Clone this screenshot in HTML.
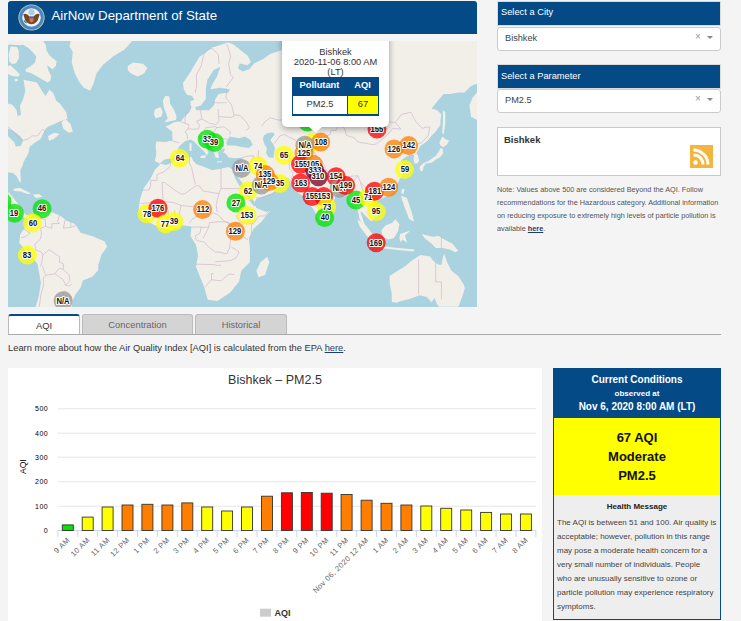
<!DOCTYPE html>
<html><head><meta charset="utf-8">
<style>
*{box-sizing:border-box;margin:0;padding:0}
html,body{width:741px;height:621px;overflow:hidden;background:#f4f4f4;font-family:"Liberation Sans",sans-serif;position:relative}
.a{position:absolute;white-space:nowrap;line-height:normal}
#hdr{position:absolute;left:8px;top:1px;width:469px;height:33px;background:#034a87;border-radius:3px 3px 0 0}
#map{position:absolute;left:8px;top:41px;width:469px;height:266px;overflow:hidden;background:#aad3df}
#map svg{position:absolute;left:0;top:0}
.land path{fill:#f2efe9}
.water path{fill:#aad3df}
.mt{position:absolute;width:40px;text-align:center;font:bold 8.8px/normal "Liberation Sans",sans-serif;color:#111;transform:scaleX(0.87);text-shadow:1px 0 0 #fff,-1px 0 0 #fff,0 1px 0 #fff,0 -1px 0 #fff,0.7px 0.7px 0 #fff,-0.7px -0.7px 0 #fff,0.7px -0.7px 0 #fff,-0.7px 0.7px 0 #fff;white-space:nowrap}
.xx{font:bold 8.5px "Liberation Sans",sans-serif;text-anchor:middle;fill:#111;stroke:#fff;stroke-width:2px;paint-order:stroke;stroke-linejoin:round;letter-spacing:-0.3px}
.phead{position:absolute;left:497px;width:224px;height:25px;background:#034a87;border:1px solid #ddd9d4}
.sel{position:absolute;left:497px;width:224px;height:24px;background:#fff;border:1px solid #cbcbcb;border-radius:3px}
.box{position:absolute;background:#fff;border:1px solid #c8c8c8}
#popup{position:absolute;left:274px;top:-10px;width:107px;height:95.5px;background:#fff;border-radius:5px;box-shadow:0 2px 6px rgba(0,0,0,0.35)}
.tab{position:absolute;top:314px;height:21px;border:1px solid #bbb;border-bottom:none;border-radius:3px 3px 0 0;background:#d4d4d4;font-size:9.4px;color:#666;text-align:center;line-height:20px}
</style></head><body>
<div id="hdr">
 <svg style="position:absolute;left:10px;top:3.3px" width="27" height="27" viewBox="0 0 28 28">
  <circle cx="14" cy="14" r="13.6" fill="#c9c98a"/>
  <circle cx="14" cy="14" r="12.8" fill="#4a86c8"/>
  <circle cx="14" cy="14" r="12.8" fill="none" stroke="#8fb6e0" stroke-width="0.8" stroke-dasharray="1 1"/>
  <circle cx="14" cy="14" r="9.6" fill="#f2f2ee"/>
  <circle cx="14" cy="8.5" r="3.2" fill="#a9cde3"/>
  <path d="M5.5,10.5 Q9,9 12,13 L14,18 L16,13 Q19,9 22.5,10.5 L20.5,17 Q17,21 14,21 Q11,21 7.5,17Z" fill="#6e4b26"/>
  <path d="M12,13 h4 v5 q-2,2.2 -4,0z" fill="#e07070"/>
  <path d="M12,13 h4 v1.8 h-4z" fill="#3c5fb0"/>
  <path d="M6,17 q1.5,2 3,2.5" stroke="#4c8a3c" stroke-width="1.3" fill="none"/>
 </svg>
 <div class="a" style="left:43.5px;top:7px;font-size:13.3px;color:#fff">AirNow Department of State</div>
</div>

<div id="map">
 <svg width="469" height="266" viewBox="8 41 469 266">
  <g class="land"><path d="M70.6,41.0 L69.5,46.4 L72.8,51.8 L71.7,62.6 L74.9,73.4 L79.3,82.0 L83.6,87.4 L90.1,90.7 L93.3,84.2 L96.5,73.4 L103.0,64.8 L113.8,56.1 L124.6,49.6 L132.2,41.0Z"/><path d="M127.8,65.8 L133.2,62.6 L143.0,63.7 L147.3,68.0 L144.0,73.4 L137.6,76.6 L131.1,73.4 L127.8,70.2Z"/><path d="M8.0,41.0 L43.1,41.0 L45.8,45.0 L46.5,50.4 L49.8,55.8 L56.6,61.2 L55.9,66.0 L52.5,69.3 L49.8,67.3 L47.1,65.3 L48.5,70.7 L51.2,76.1 L50.5,80.6 L47.6,82.5 L41.8,79.2 L36.3,76.1 L30.3,72.7 L26.2,72.0 L25.5,69.3 L30.3,66.6 L35.0,62.6 L36.3,56.5 L33.0,52.5 L28.2,47.7 L23.5,45.0 L16.1,45.0 L10.7,44.4 L8.0,45.0Z"/><path d="M10.7,46.4 L16.8,47.1 L18.8,51.1 L18.8,58.5 L16.1,63.3 L12.0,63.9 L9.3,61.2 L8.7,54.5Z"/><path d="M8.0,66.0 L10.7,65.3 L15.4,70.0 L20.1,74.7 L18.1,76.8 L12.0,76.1 L8.0,74.1Z"/><path d="M14.3,79.2 L17.7,78.7 L17.7,81.1 L14.8,81.6Z"/><path d="M23.5,79.7 L36.9,82.5 L42.8,92.2 L45.6,96.1 L49.5,89.4 L53.3,93.3 L56.4,101.0 L59.8,103.6 L66.3,112.3 L67.4,118.7 L60.9,120.9 L54.4,124.1 L49.0,126.3 L45.8,128.5 L43.6,132.8 L40.4,139.3 L35.0,142.5 L29.6,146.8 L28.5,153.3 L24.2,160.8 L22.2,166.4 L20.2,170.3 L20.9,179.3 L20.2,183.2 L17.0,176.7 L13.2,172.9 L8.0,172.2 L8.0,103.6 L12.3,104.7 L16.6,110.1 L17.7,116.6 L21.0,114.4 L19.9,105.8 L23.1,99.3 L25.3,90.7Z"/><path d="M61.6,122.0 L65.2,118.7 L70.6,124.1 L72.8,131.7 L68.5,132.8 L63.1,128.5Z"/><path d="M48.0,136.0 L54.4,132.8 L59.8,133.9 L53.3,139.3 L49.0,140.8Z"/><path d="M13.2,189.0 L19.6,187.7 L26.0,190.9 L31.2,193.5 L27.3,194.1 L20.9,191.5 L14.4,190.9Z"/><path d="M32.5,194.8 L38.9,194.1 L42.8,196.7 L36.3,198.0Z"/><path d="M8.0,192.0 L12.0,196.0 L18.0,204.0 L22.0,210.0 L26.0,215.0 L32.0,216.0 L30.0,220.0 L22.0,217.0 L16.0,210.0 L10.0,204.0 L8.0,200.0Z"/><path d="M23.6,229.3 L32.0,219.0 L40.9,213.8 L51.2,212.1 L59.8,215.5 L66.7,220.7 L75.3,224.1 L80.5,232.8 L92.6,236.2 L104.7,241.4 L107.2,246.6 L101.2,255.2 L98.3,265.0 L98.3,270.0 L92.6,276.5 L82.9,280.5 L80.5,287.8 L75.6,294.3 L72.4,300.8 L71.6,307.0 L35.7,307.0 L39.1,294.8 L40.9,282.8 L39.1,272.4 L37.4,263.8 L32.2,256.9 L25.3,250.0 L19.3,243.1 L20.2,234.5Z"/><path d="M290.0,41.0 L477.0,41.0 L477.0,83.7 L471.0,86.1 L464.6,92.5 L458.2,92.5 L450.1,94.1 L443.7,94.1 L437.2,101.4 L431.6,108.6 L437.2,110.2 L441.3,114.3 L440.5,119.9 L440.4,125.0 L435.6,131.8 L431.7,135.6 L427.9,140.5 L424.0,143.4 L420.1,146.3 L418.2,150.1 L416.3,153.0 L418.2,155.9 L419.2,160.7 L417.2,163.6 L414.3,163.6 L413.4,158.8 L414.3,155.0 L411.4,154.0 L405.6,156.9 L400.8,160.7 L404.0,166.0 L402.5,175.0 L399.8,178.9 L392.7,193.1 L383.3,197.9 L376.2,201.4 L372.6,205.0 L378.5,214.4 L371.4,221.5 L364.3,214.4 L360.8,210.9 L364.3,223.9 L370.3,231.0 L366.7,231.0 L359.6,219.2 L357.2,207.3 L350.1,202.6 L345.4,190.8 L335.9,195.5 L331.2,207.3 L326.5,221.5 L318.9,220.0 L314.1,210.2 L304.4,197.3 L293.1,189.2 L288.3,178.0 L281.9,179.6 L278.6,189.2 L272.2,193.0 L256.1,199.0 L254.2,203.8 L256.4,208.1 L266.3,212.0 L270.4,210.2 L261.5,221.7 L253.8,228.4 L249.0,238.1 L249.9,249.1 L249.9,262.0 L241.3,270.7 L239.1,281.5 L230.5,292.3 L217.5,300.9 L207.8,299.8 L204.5,288.0 L200.2,277.2 L195.9,266.4 L198.1,255.6 L195.9,244.8 L190.5,236.1 L191.6,226.4 L183.0,225.3 L170.0,229.7 L159.4,227.4 L150.2,222.8 L143.4,215.9 L138.8,209.0 L139.9,199.8 L143.4,188.4 L150.2,179.2 L154.8,170.0 L156.4,168.3 L159.7,165.1 L159.7,163.5 L154.8,161.1 L156.4,153.8 L155.6,145.8 L156.4,141.5 L166.0,142.0 L172.5,140.0 L172.1,131.4 L165.4,126.5 L168.1,125.5 L174.8,122.0 L180.6,121.5 L184.6,116.7 L189.5,111.9 L191.1,108.6 L190.3,101.4 L194.3,99.8 L191.9,95.8 L187.0,94.9 L183.8,89.3 L183.0,82.9 L189.7,73.2 L199.3,57.1 L212.2,47.4 L228.3,42.6 L233.1,44.2 L241.2,50.7 L247.6,55.5 L250.9,61.9 L247.6,65.2 L239.6,63.5 L238.0,68.4 L242.8,71.6 L249.3,69.2 L254.1,63.5 L263.7,58.7 L270.2,53.9 L279.9,50.7 L282.0,50.0Z"/><path d="M165.3,95.8 L169.3,96.6 L170.1,103.8 L174.2,110.2 L176.6,116.7 L175.8,119.9 L169.3,121.5 L164.5,122.3 L167.7,118.3 L166.1,113.5 L163.7,107.0 L162.9,100.6Z"/><path d="M154.8,109.4 L160.5,107.0 L162.9,111.9 L161.3,116.7 L155.6,118.3 L154.0,114.3Z"/><path d="M267.2,256.7 L269.3,262.1 L265.0,275.0 L258.5,277.2 L256.4,270.7 L260.7,262.1Z"/><path d="M381.5,230.0 L385.4,225.6 L392.4,222.8 L395.2,219.0 L399.4,224.2 L398.0,231.2 L393.8,238.2 L388.2,239.6 L382.6,236.8Z"/><path d="M357.2,219.2 L364.3,223.9 L373.8,235.7 L377.4,242.8 L373.8,242.8 L366.7,235.7 L359.6,226.3Z"/><path d="M378.0,246.0 L385.4,246.6 L398.0,248.0 L414.8,249.4 L413.4,251.5 L398.0,250.1 L386.8,248.7 L379.0,248.5Z"/><path d="M400.1,234.0 L410.6,230.5 L405.0,235.4 L407.1,242.4 L402.2,239.6 L400.8,242.4 L399.4,238.2Z"/><path d="M401.0,195.5 L406.9,197.9 L411.7,212.1 L414.0,221.5 L409.3,219.2 L404.6,207.3 L402.2,200.2Z"/><path d="M402.2,188.4 L404.6,189.6 L403.4,194.3 L401.0,193.1Z"/><path d="M421.8,234.0 L427.4,235.4 L433.0,236.8 L438.6,236.1 L444.2,239.6 L452.6,243.8 L458.2,250.8 L455.4,252.2 L449.8,249.4 L442.8,248.0 L435.8,248.0 L431.6,243.8 L424.6,238.2Z"/><path d="M389.6,276.0 L393.8,273.2 L405.0,266.2 L412.0,260.6 L420.4,255.0 L430.2,256.4 L433.0,260.6 L438.6,264.8 L441.4,264.8 L442.8,257.8 L444.2,253.6 L447.0,262.0 L451.2,270.4 L458.2,276.0 L463.8,284.4 L464.8,288.2 L462.6,295.8 L458.3,306.8 L438.9,306.8 L436.7,303.4 L434.6,298.0 L431.3,302.3 L427.0,296.9 L419.4,295.3 L409.7,299.0 L400.0,301.2 L397.2,302.8 L391.8,302.1 L391.8,294.0 L389.8,284.5Z"/><path d="M442.3,136.6 L446.2,139.5 L449.1,140.5 L447.2,144.3 L443.3,147.2 L440.4,145.3 L439.4,142.4Z"/><path d="M442.3,148.2 L443.3,153.0 L440.4,156.9 L435.6,159.8 L431.7,162.7 L425.9,163.6 L423.0,167.5 L420.1,166.5 L423.0,163.6 L428.8,160.7 L435.6,155.9 L438.5,152.1 L440.4,148.2Z"/><path d="M420.1,165.6 L423.5,166.5 L423.0,170.4 L421.1,171.4 L419.6,169.0Z"/><path d="M442.9,110.2 L445.3,111.9 L445.3,123.1 L443.7,134.4 L442.1,132.8 L442.9,121.5Z"/><path d="M477.0,92.5 L472.7,97.4 L469.4,105.4 L471.0,116.7 L477.0,119.9Z"/></g>
  <g class="water"><path d="M8.0,128.5 L14.5,131.7 L19.9,136.0 L23.1,140.3 L21.0,145.7 L15.6,146.8 L14.5,142.5 L10.2,138.2 L8.0,136.0Z"/><path d="M220.3,66.8 L217.0,76.4 L212.2,84.5 L210.6,89.3 L220.3,87.7 L229.9,89.3 L228.3,92.5 L218.7,94.1 L215.4,99.0 L213.8,105.4 L209.0,110.3 L196.1,110.3 L195.3,107.0 L200.9,105.4 L205.8,99.0 L205.8,89.3 L207.4,79.7 L213.8,70.0Z"/><path d="M159.7,163.5 L164.5,159.5 L170.9,158.6 L176.6,152.2 L179.0,146.6 L184.9,141.2 L190.5,139.6 L193.8,141.2 L197.0,144.4 L201.0,148.5 L204.3,151.7 L205.9,154.1 L206.7,155.5 L208.5,153.0 L206.7,148.5 L204.3,145.2 L200.2,139.6 L197.8,136.3 L201.0,135.5 L206.7,141.2 L212.4,147.7 L214.0,152.5 L215.6,157.4 L218.9,158.2 L218.1,151.7 L223.7,148.5 L225.3,148.5 L223.1,152.7 L225.3,153.3 L228.6,157.4 L235.1,158.3 L243.2,157.5 L240.0,161.6 L234.3,167.2 L233.5,170.4 L228.6,167.1 L220.5,168.7 L212.4,170.3 L204.3,167.1 L196.2,163.9 L193.0,160.6 L191.3,156.6 L188.1,157.4 L180.0,159.0 L166.1,165.1Z"/><path d="M226.3,142.2 L229.5,136.6 L239.2,138.2 L244.8,136.6 L250.4,139.8 L252.8,144.7 L248.8,147.9 L241.6,147.1 L235.1,145.5 L227.1,145.5Z"/><path d="M263.7,135.5 L267.7,133.0 L273.3,132.6 L274.5,134.7 L271.7,137.9 L270.5,140.3 L273.3,144.3 L274.9,148.3 L274.1,154.0 L273.3,158.0 L268.5,157.2 L266.1,153.2 L266.9,148.3 L264.5,144.3 L262.9,139.5Z"/><path d="M233.5,170.4 L236.0,175.0 L241.0,181.0 L246.0,189.0 L251.0,197.0 L256.0,204.0 L254.0,206.5 L249.0,200.0 L244.0,192.0 L239.0,185.0 L235.0,178.0 L233.0,172.0Z"/><path d="M262.0,178.0 L270.0,180.0 L278.0,186.0 L282.0,190.0 L276.0,190.0 L268.0,186.0 L262.0,182.0Z"/></g>
  <g class="land"><path d="M201.0,155.8 L206.0,155.2 L205.0,158.2 L200.0,157.8Z"/><path d="M189.5,143.2 L191.5,143.2 L191.5,151.0 L189.5,151.0Z"/><path d="M217.0,161.5 L222.0,161.2 L222.0,162.3 L217.0,162.5Z"/><path d="M328.0,218.0 L330.0,219.0 L330.0,223.0 L328.0,222.0Z"/></g>
  <path fill="none" stroke="#c9aec9" stroke-width="0.6" d="M8.2,127.1 L13.9,131.9 L16.8,135.9 L23.4,140.4 L29.1,138.6 L31.6,135.9 L37.7,135.9 L40.5,131.9 L42.4,129.4 L44.7,130.5 L46.2,135.9M170.1,140.1 L174.8,141.7 L179.6,142.7M178.2,118.7 L181.5,122.2 L185.1,123.4 L189.1,124.8 L187.9,128.8 L184.9,132.1 L186.8,133.5 L187.8,139.1M185.1,123.4 L184.9,119.0 L186.8,111.3M190.0,106.8 L192.3,107.1M200.5,110.0 L201.2,116.0 L202.0,119.0 L196.7,121.1 L199.7,125.4 L198.2,129.1 L191.7,129.1 L187.9,128.8M218.2,109.0 L218.3,115.6 L219.1,120.5 L216.2,124.6 L209.6,123.4 L202.0,119.0M213.4,102.8 L226.7,102.8M226.7,91.1 L225.8,98.0 L231.4,104.5 L234.3,116.0 L230.5,117.5 L219.1,116.6M234.3,115.0 L240.0,115.3 L246.1,121.9 L249.5,127.7 L245.7,130.5M216.2,127.7 L224.0,126.8 L230.5,131.9 L229.7,134.8M216.4,138.0 L227.8,139.3M209.6,133.0 L216.4,137.2 L217.0,142.9 L212.4,145.0 L210.4,143.7 L204.8,139.9 L199.3,134.6M204.3,130.8 L205.8,127.7 L215.3,126.6 L216.8,127.4 L213.4,132.7 L209.2,133.5 L204.3,130.8M211.5,149.4 L213.4,146.7 L217.0,145.5 L223.5,144.5 L223.3,146.5M195.2,92.6 L196.7,85.0 L196.3,74.9 L201.1,66.2 L203.9,54.2 L208.7,49.1 L212.4,48.5M219.1,63.9 L218.3,54.7 L212.4,48.5M226.7,44.2 L228.6,49.1 L230.5,56.2 L228.6,63.9 L230.5,74.9 L233.3,77.4 L226.3,87.0M261.9,126.3 L264.7,121.9 L270.4,117.8 L279.3,120.2 L289.4,119.0 L289.4,109.7 L304.6,105.5 L314.1,111.3 L318.9,109.7 L321.7,114.4 L332.1,119.0 L338.8,124.6M274.2,143.7 L279.9,135.9 L284.6,134.6 L289.4,137.2 L295.1,139.9 L298.9,143.7 L302.7,146.2 L307.4,142.9 L314.1,140.6 L325.5,141.7 L326.4,135.9 L330.2,134.6 L331.2,129.9 L335.9,130.5 L338.8,124.6M338.8,124.6 L346.4,120.5 L359.7,116.0 L371.1,121.4 L378.7,124.0 L390.1,121.9 L395.2,122.5 L400.9,129.1 L392.9,128.5 L386.3,135.9 L376.8,143.7 L373.0,144.7 L357.8,141.9 L354.6,138.0 L346.4,135.4 L344.5,128.3 L338.8,124.6M395.2,122.5 L401.5,114.4 L411.0,112.2 L415.8,121.9 L422.4,128.3 L426.2,127.1 L430.0,127.1 L428.1,135.9 L422.8,141.2 L421.6,142.7M409.7,148.7 L416.7,144.0 L421.6,142.7M314.1,140.6 L313.1,149.9 L316.0,155.9 L321.3,159.4 L324.5,166.3 L327.4,171.3 L333.1,175.0 L340.7,177.2 L348.3,176.5 L357.8,175.7 L360.6,182.4 L366.4,188.2 L375.9,187.6 L378.7,189.6M314.1,165.1 L315.0,169.6 L308.4,176.1 L305.5,179.3 L303.6,185.1M258.6,150.4 L258.1,155.5 L259.9,160.6 L260.9,165.1 L264.7,170.7M289.4,156.9 L289.4,168.9 L293.2,172.9 L290.4,182.0M276.1,155.2 L281.8,153.6 L289.4,156.9M242.8,172.9 L247.6,166.9 L253.3,169.4 L261.9,173.7 L264.7,173.9 L268.5,182.4 L271.4,184.1 L278.9,187.1 L272.3,194.6 L265.6,196.6 L261.9,198.0 L255.6,197.6M253.9,155.7 L251.4,162.0 L247.6,166.9M241.9,157.8 L245.7,156.4 L253.9,155.7M349.2,190.6 L352.1,183.4 L357.8,175.7M360.6,182.4 L363.5,192.6 L369.2,187.6M363.5,192.6 L367.3,196.6 L373.0,202.5 L374.9,210.2M360.6,212.2 L363.5,218.8 L365.4,219.8M170.1,160.6 L170.3,166.3 L164.0,171.8 L157.0,174.6 L157.0,177.6 L157.0,180.3 L150.7,180.3 L150.7,185.5 L148.8,190.0 L141.2,190.0M164.4,182.4 L175.4,190.6 L181.5,194.2 L184.9,193.6 L196.3,185.5 L200.1,186.5 L202.9,191.0 L219.1,193.6 L219.1,192.6 L221.0,188.6M189.7,156.2 L189.1,162.9 L191.6,167.4 L192.5,171.8 L195.3,184.5M221.0,168.3 L221.0,188.6 L243.8,188.6M150.7,202.5 L163.1,201.5 L173.5,202.5 L181.1,205.4 L188.7,206.4 L200.1,206.4 L202.9,212.2 L213.4,213.1 L218.2,215.0 L224.8,221.7 L232.4,224.5 L240.0,222.6 L253.3,223.6M151.7,203.5 L163.1,201.5 L162.1,182.6 L164.4,182.4M219.1,192.6 L216.2,204.4 L217.2,212.2M242.8,203.9 L239.1,213.1 L236.2,216.0 L240.0,221.7M197.2,240.5 L204.8,242.4 L207.7,246.2 L215.3,252.0 L219.1,252.0 L226.7,253.9 L229.6,248.1 L230.5,238.6 L229.6,233.9 L230.5,229.2 L232.4,226.8 L228.6,222.6 L225.8,221.7 L219.1,221.7 L209.6,222.6 L208.7,227.3 L205.8,233.0 L202.9,238.6M195.7,264.2 L213.4,264.6 L218.2,265.6 L221.0,265.2M204.8,287.2 L211.5,279.8 L211.5,273.6 L213.4,273.6M211.5,279.8 L221.0,280.8 L228.6,274.2 L234.3,274.6M215.3,261.7 L230.5,260.7 L236.2,257.8 L239.1,252.0 L235.2,249.1 L231.4,247.2M248.0,240.0 L238.1,233.0 L230.5,233.0M251.4,234.3 L251.4,223.6M253.3,223.6 L259.0,216.0 L264.7,216.0 L270.4,209.3M178.6,219.0 L180.3,208.9 L181.1,205.4M201.1,208.3 L199.2,212.2 L196.3,216.9 L192.5,218.8 L189.7,222.6M151.7,217.9 L159.2,215.0 L158.3,211.2 L150.7,207.3M167.8,221.7 L168.4,210.2M175.8,219.8 L174.4,210.2M141.2,203.5 L150.7,202.5M191.6,227.3 L195.0,227.0 L200.1,227.0 L203.9,227.3 L208.7,227.3M196.3,240.5 L195.3,235.8 L200.1,233.0 L201.1,227.0M36.7,208.7 L35.8,214.1 L36.7,217.9 L45.2,219.4 L45.6,226.4 L40.5,228.3 L41.5,233.0 L40.5,239.0M59.5,215.0 L57.6,221.7 L59.5,223.6 L51.9,223.6 L51.9,228.3 L45.6,226.4M65.2,219.8 L63.3,228.3 L70.9,227.3 L70.9,220.3M75.7,223.0 L74.7,226.4 L70.9,227.3M21.1,237.5 L25.3,236.8 L30.1,233.0 L23.4,228.8M40.5,239.0 L34.8,244.3 L35.8,250.0 L41.5,252.0 L42.8,254.9 L42.4,258.7 L41.5,264.6 L39.9,266.2M42.8,254.9 L49.1,249.7 L59.5,256.8 L59.5,262.2 L63.3,263.6 L63.3,269.6 L69.0,274.6 L70.0,280.8 L65.2,285.0 L69.0,286.1 L71.9,284.0M42.4,265.6 L44.3,271.6 L46.2,275.3 L54.8,273.6 L59.5,268.2 L63.3,269.6M46.2,275.3 L43.3,277.7 L43.7,284.0 L40.9,294.8 L39.6,303.9 L37.7,313.5M54.8,273.6 L63.3,279.8 L65.2,285.0M62.5,298.2 L64.1,290.9 L68.1,292.6 L72.2,298.6M441.4,236.0 L441.4,248.3M418.6,259.5 L418.6,294.2M435.7,261.7 L435.7,281.9 L441.4,281.9 L441.4,299.3"/>
  <g><circle cx="2" cy="201.5" r="9.5" fill="rgba(0,228,0,0.76)"/><circle cx="14.4" cy="213.2" r="9.5" fill="rgba(0,228,0,0.76)"/><circle cx="42.1" cy="208.7" r="9.5" fill="rgba(0,228,0,0.76)"/><circle cx="32.5" cy="222.9" r="9.5" fill="rgba(255,255,0,0.76)"/><circle cx="27.3" cy="255.1" r="9.5" fill="rgba(255,255,0,0.76)"/><circle cx="63.1" cy="300.8" r="9.5" fill="rgba(153,153,153,0.76)"/><circle cx="146.9" cy="213.8" r="9.5" fill="rgba(255,255,0,0.76)"/><circle cx="158" cy="208.2" r="9.5" fill="rgba(255,0,0,0.76)"/><circle cx="165.4" cy="223.8" r="9.5" fill="rgba(255,255,0,0.76)"/><circle cx="174" cy="221.6" r="9.5" fill="rgba(255,255,0,0.76)"/><circle cx="179.5" cy="158.2" r="9.5" fill="rgba(255,255,0,0.76)"/><circle cx="207.2" cy="139.3" r="9.5" fill="rgba(0,228,0,0.76)"/><circle cx="214.4" cy="142.5" r="9.5" fill="rgba(0,228,0,0.76)"/><circle cx="202.6" cy="209.6" r="9.5" fill="rgba(255,126,0,0.76)"/><circle cx="241.6" cy="168.4" r="9.5" fill="rgba(153,153,153,0.76)"/><circle cx="257.8" cy="165.8" r="9.5" fill="rgba(255,255,0,0.76)"/><circle cx="284.1" cy="155.3" r="9.5" fill="rgba(255,255,0,0.76)"/><circle cx="248" cy="190.8" r="9.5" fill="rgba(255,255,0,0.76)"/><circle cx="235.9" cy="202.9" r="9.5" fill="rgba(0,228,0,0.76)"/><circle cx="247" cy="215.4" r="9.5" fill="rgba(255,255,0,0.76)"/><circle cx="235.4" cy="231.3" r="9.5" fill="rgba(255,126,0,0.76)"/><circle cx="261.3" cy="185.1" r="9.5" fill="rgba(153,153,153,0.76)"/><circle cx="279.8" cy="183.5" r="9.5" fill="rgba(255,255,0,0.76)"/><circle cx="265.3" cy="174.6" r="9.5" fill="rgba(255,126,0,0.76)"/><circle cx="269.2" cy="181.6" r="9.5" fill="rgba(255,126,0,0.76)"/><circle cx="307.5" cy="122" r="9.5" fill="rgba(0,228,0,0.76)"/><circle cx="312.8" cy="142.5" r="9.5" fill="rgba(255,255,0,0.76)"/><circle cx="320.7" cy="142.1" r="9.5" fill="rgba(255,126,0,0.76)"/><circle cx="304.9" cy="145.2" r="9.5" fill="rgba(153,153,153,0.76)"/><circle cx="304" cy="153.1" r="9.5" fill="rgba(255,126,0,0.76)"/><circle cx="300.6" cy="164.2" r="9.5" fill="rgba(255,0,0,0.76)"/><circle cx="313.1" cy="164.2" r="9.5" fill="rgba(255,126,0,0.76)"/><circle cx="314.6" cy="170.5" r="9.5" fill="rgba(126,0,35,0.76)"/><circle cx="318.4" cy="176.7" r="9.5" fill="rgba(126,0,35,0.76)"/><circle cx="300.6" cy="183" r="9.5" fill="rgba(255,0,0,0.76)"/><circle cx="336.1" cy="176.7" r="9.5" fill="rgba(255,0,0,0.76)"/><circle cx="339.3" cy="188.3" r="9.5" fill="rgba(153,153,153,0.76)"/><circle cx="345.6" cy="185.5" r="9.5" fill="rgba(255,0,0,0.76)"/><circle cx="312.1" cy="196.6" r="9.5" fill="rgba(255,0,0,0.76)"/><circle cx="323.6" cy="196.6" r="9.5" fill="rgba(255,0,0,0.76)"/><circle cx="326.7" cy="207.1" r="9.5" fill="rgba(255,255,0,0.76)"/><circle cx="324.6" cy="217.6" r="9.5" fill="rgba(0,228,0,0.76)"/><circle cx="355.9" cy="200.1" r="9.5" fill="rgba(0,228,0,0.76)"/><circle cx="368.3" cy="197.5" r="9.5" fill="rgba(255,255,0,0.76)"/><circle cx="374.5" cy="191.3" r="9.5" fill="rgba(255,0,0,0.76)"/><circle cx="388.7" cy="187.3" r="9.5" fill="rgba(255,126,0,0.76)"/><circle cx="376.3" cy="211.6" r="9.5" fill="rgba(255,255,0,0.76)"/><circle cx="376.2" cy="242.8" r="9.5" fill="rgba(255,0,0,0.76)"/><circle cx="404.5" cy="169.5" r="9.5" fill="rgba(255,255,0,0.76)"/><circle cx="394" cy="148.9" r="9.5" fill="rgba(255,126,0,0.76)"/><circle cx="408.6" cy="145.6" r="9.5" fill="rgba(255,126,0,0.76)"/><circle cx="377" cy="129" r="9.5" fill="rgba(255,0,0,0.76)"/></g>
   </svg>
 <div class="mt" style="left:-13.6px;top:166.9px">19</div><div class="mt" style="left:14.1px;top:162.4px">46</div><div class="mt" style="left:4.5px;top:176.6px">60</div><div class="mt" style="left:-0.7px;top:208.8px">83</div><div class="mt" style="left:35.1px;top:254.5px">N/A</div><div class="mt" style="left:118.9px;top:167.5px">78</div><div class="mt" style="left:130.0px;top:161.9px">176</div><div class="mt" style="left:137.4px;top:177.5px">77</div><div class="mt" style="left:146.0px;top:175.3px">39</div><div class="mt" style="left:151.5px;top:111.9px">64</div><div class="mt" style="left:179.2px;top:93.0px">33</div><div class="mt" style="left:186.4px;top:96.2px">39</div><div class="mt" style="left:174.6px;top:163.3px">112</div><div class="mt" style="left:213.6px;top:122.1px">N/A</div><div class="mt" style="left:229.8px;top:119.5px">74</div><div class="mt" style="left:256.1px;top:109.0px">65</div><div class="mt" style="left:220.0px;top:144.5px">62</div><div class="mt" style="left:207.9px;top:156.6px">27</div><div class="mt" style="left:219.0px;top:169.1px">153</div><div class="mt" style="left:207.4px;top:185.0px">129</div><div class="mt" style="left:233.3px;top:138.8px">N/A</div><div class="mt" style="left:251.8px;top:137.2px">35</div><div class="mt" style="left:237.3px;top:128.3px">135</div><div class="mt" style="left:241.2px;top:135.3px">129</div><div class="mt" style="left:292.7px;top:95.8px">108</div><div class="mt" style="left:276.9px;top:98.9px">N/A</div><div class="mt" style="left:276.0px;top:106.8px">125</div><div class="mt" style="left:272.6px;top:117.9px">155</div><div class="mt" style="left:285.1px;top:117.9px">105</div><div class="mt" style="left:286.6px;top:124.2px">333</div><div class="mt" style="left:290.4px;top:130.4px">310</div><div class="mt" style="left:272.6px;top:136.7px">163</div><div class="mt" style="left:308.1px;top:130.4px">154</div><div class="mt" style="left:311.3px;top:142.0px">N/A</div><div class="mt" style="left:317.6px;top:139.2px">199</div><div class="mt" style="left:284.1px;top:150.3px">155</div><div class="mt" style="left:295.6px;top:150.3px">153</div><div class="mt" style="left:298.7px;top:160.8px">73</div><div class="mt" style="left:296.6px;top:171.3px">40</div><div class="mt" style="left:327.9px;top:153.8px">45</div><div class="mt" style="left:340.3px;top:151.2px">71</div><div class="mt" style="left:346.5px;top:145.0px">181</div><div class="mt" style="left:360.7px;top:141.0px">124</div><div class="mt" style="left:348.3px;top:165.3px">95</div><div class="mt" style="left:348.2px;top:196.5px">169</div><div class="mt" style="left:376.5px;top:123.2px">59</div><div class="mt" style="left:366.0px;top:102.6px">126</div><div class="mt" style="left:380.6px;top:99.3px">142</div><div class="mt" style="left:349.0px;top:82.7px">155</div>
 <div id="popup">
  <div class="a" style="left:0;width:107px;text-align:center;top:15.7px;font-size:9.3px;color:#333;line-height:10px;white-space:normal">Bishkek<br>2020-11-06 8:00 AM<br>(LT)</div>
  <div style="position:absolute;left:10px;top:46px;width:87px;height:38.5px;background:#034a87">
   <div class="a" style="left:0;top:-1px;width:55px;height:18px;text-align:center;line-height:18px;font-weight:bold;font-size:9.3px;color:#fff">Pollutant</div>
   <div class="a" style="left:55px;top:-1px;width:31px;height:18px;text-align:center;line-height:18px;font-weight:bold;font-size:9.3px;color:#fff">AQI</div>
   <div class="a" style="left:1px;top:18.6px;width:54px;height:18.9px;background:#fff;text-align:center;line-height:17.5px;font-size:9.3px;color:#333">PM2.5</div>
   <div class="a" style="left:56px;top:18.6px;width:30px;height:18.9px;background:#ff0;text-align:center;line-height:17.5px;font-size:9.3px;color:#333">67</div>
  </div>
 </div>
 <svg style="position:absolute;left:299.5px;top:85px" width="15" height="7" viewBox="0 0 15 7"><path d="M0,0 L7.5,6.5 L15,0Z" fill="#fff"/></svg>
</div>

<div class="phead" style="top:1px"><div class="a" style="left:3px;top:5.3px;font-size:9.3px;color:#fff">Select a City</div></div>
<div class="sel" style="top:27px">
 <div class="a" style="left:7px;top:5px;font-size:9.2px;color:#444">Bishkek</div>
 <div class="a" style="left:197px;top:2.8px;font-size:10px;color:#999">×</div>
 <div style="position:absolute;left:209px;top:7.8px;width:0;height:0;border-left:3px solid transparent;border-right:3px solid transparent;border-top:3.5px solid #888"></div>
</div>
<div class="phead" style="top:64px"><div class="a" style="left:3px;top:5.8px;font-size:9.3px;color:#fff">Select a Parameter</div></div>
<div class="sel" style="top:89px">
 <div class="a" style="left:7px;top:5px;font-size:9.2px;color:#444">PM2.5</div>
 <div class="a" style="left:197px;top:2.8px;font-size:10px;color:#999">×</div>
 <div style="position:absolute;left:209px;top:7.8px;width:0;height:0;border-left:3px solid transparent;border-right:3px solid transparent;border-top:3.5px solid #888"></div>
</div>
<div class="box" style="left:497px;top:127px;width:224px;height:49px">
 <div class="a" style="left:6px;top:6px;font-size:9.5px;font-weight:bold;color:#333">Bishkek</div>
 <svg style="position:absolute;left:192px;top:17px" width="23" height="23" viewBox="0 0 23 23">
  <rect width="23" height="23" fill="#f4b53f"/>
  <circle cx="5.5" cy="17.5" r="2.3" fill="#fff"/>
  <path d="M3.5,10 A9.5,9.5 0 0 1 13,19.5" stroke="#fff" stroke-width="3" fill="none"/>
  <path d="M3.5,5 A14.5,14.5 0 0 1 18,19.5" stroke="#fff" stroke-width="3" fill="none"/>
 </svg>
</div>
<div class="a" style="left:497px;top:183px;font-size:7.3px;color:#555;line-height:13px;white-space:normal;width:230px">Note: Values above 500 are considered Beyond the AQI. Follow<br>recommendations for the Hazardous category. Additional information<br>on reducing exposure to extremely high levels of particle pollution is<br>available <b style="color:#1d3f6e;text-decoration:underline">here</b>.</div>

<div class="tab" style="left:8px;width:72px;background:#fff;border-top:2px solid #034a87;color:#333;height:21px;line-height:19px">AQI</div>
<div class="tab" style="left:82px;width:111px">Concentration</div>
<div class="tab" style="left:195px;width:92px">Historical</div>
<div style="position:absolute;left:8px;top:334px;width:713px;height:1px;background:#aaa"></div>
<div class="a" style="left:8px;top:342.8px;font-size:9.33px;color:#333">Learn more about how the Air Quality Index [AQI] is calculated from the EPA <span style="color:#1d3f6e;text-decoration:underline">here</span>.</div>

<div style="position:absolute;left:8px;top:368px;width:534px;height:253px;background:#fff">
<svg width="534" height="253" viewBox="8 368 534 253" style="position:absolute;left:0;top:0;font-family:'Liberation Sans',sans-serif"><text x="275" y="383.8" text-anchor="middle" font-size="12.5" fill="#333">Bishkek – PM2.5</text><text x="48" y="533.0" text-anchor="end" font-size="7" letter-spacing="0.4" fill="#000">0</text><rect x="57.8" y="505.7" width="478" height="1" fill="#e6e6e6"/><text x="48" y="508.7" text-anchor="end" font-size="7" letter-spacing="0.4" fill="#000">100</text><rect x="57.8" y="481.3" width="478" height="1" fill="#e6e6e6"/><text x="48" y="484.3" text-anchor="end" font-size="7" letter-spacing="0.4" fill="#000">200</text><rect x="57.8" y="456.7" width="478" height="1" fill="#e6e6e6"/><text x="48" y="459.7" text-anchor="end" font-size="7" letter-spacing="0.4" fill="#000">300</text><rect x="57.8" y="432.7" width="478" height="1" fill="#e6e6e6"/><text x="48" y="435.7" text-anchor="end" font-size="7" letter-spacing="0.4" fill="#000">400</text><rect x="57.8" y="408.3" width="478" height="1" fill="#e6e6e6"/><text x="48" y="411.3" text-anchor="end" font-size="7" letter-spacing="0.4" fill="#000">500</text><text transform="translate(26.3,466.7) rotate(-90)" text-anchor="middle" font-size="8.6" fill="#000">AQI</text><rect x="57.3" y="530.5" width="1" height="6.5" fill="#ccd6eb"/><rect x="77.2" y="530.5" width="1" height="6.5" fill="#ccd6eb"/><rect x="97.1" y="530.5" width="1" height="6.5" fill="#ccd6eb"/><rect x="117.1" y="530.5" width="1" height="6.5" fill="#ccd6eb"/><rect x="137.0" y="530.5" width="1" height="6.5" fill="#ccd6eb"/><rect x="156.9" y="530.5" width="1" height="6.5" fill="#ccd6eb"/><rect x="176.8" y="530.5" width="1" height="6.5" fill="#ccd6eb"/><rect x="196.7" y="530.5" width="1" height="6.5" fill="#ccd6eb"/><rect x="216.7" y="530.5" width="1" height="6.5" fill="#ccd6eb"/><rect x="236.6" y="530.5" width="1" height="6.5" fill="#ccd6eb"/><rect x="256.5" y="530.5" width="1" height="6.5" fill="#ccd6eb"/><rect x="276.4" y="530.5" width="1" height="6.5" fill="#ccd6eb"/><rect x="296.3" y="530.5" width="1" height="6.5" fill="#ccd6eb"/><rect x="316.3" y="530.5" width="1" height="6.5" fill="#ccd6eb"/><rect x="336.2" y="530.5" width="1" height="6.5" fill="#ccd6eb"/><rect x="356.1" y="530.5" width="1" height="6.5" fill="#ccd6eb"/><rect x="376.0" y="530.5" width="1" height="6.5" fill="#ccd6eb"/><rect x="395.9" y="530.5" width="1" height="6.5" fill="#ccd6eb"/><rect x="415.9" y="530.5" width="1" height="6.5" fill="#ccd6eb"/><rect x="435.8" y="530.5" width="1" height="6.5" fill="#ccd6eb"/><rect x="455.7" y="530.5" width="1" height="6.5" fill="#ccd6eb"/><rect x="475.6" y="530.5" width="1" height="6.5" fill="#ccd6eb"/><rect x="495.5" y="530.5" width="1" height="6.5" fill="#ccd6eb"/><rect x="515.5" y="530.5" width="1" height="6.5" fill="#ccd6eb"/><rect x="535.4" y="530.5" width="1" height="6.5" fill="#ccd6eb"/><rect x="57.8" y="530" width="478" height="1" fill="#ccd6eb"/><rect x="62.3" y="524.9" width="11" height="5.6" fill="#00e400" stroke="#333" stroke-width="0.9"/><text transform="translate(70.3,540.5) rotate(-45)" text-anchor="end" font-size="7.6" letter-spacing="0.35" fill="#666">9 AM</text><rect x="82.2" y="517.1" width="11" height="13.4" fill="#ffff00" stroke="#333" stroke-width="0.9"/><text transform="translate(90.2,540.5) rotate(-45)" text-anchor="end" font-size="7.6" letter-spacing="0.35" fill="#666">10 AM</text><rect x="102.1" y="507.0" width="11" height="23.5" fill="#ffff00" stroke="#333" stroke-width="0.9"/><text transform="translate(110.1,540.5) rotate(-45)" text-anchor="end" font-size="7.6" letter-spacing="0.35" fill="#666">11 AM</text><rect x="122.0" y="505.0" width="11" height="25.5" fill="#ff7e00" stroke="#333" stroke-width="0.9"/><text transform="translate(130.0,540.5) rotate(-45)" text-anchor="end" font-size="7.6" letter-spacing="0.35" fill="#666">12 PM</text><rect x="141.9" y="504.3" width="11" height="26.2" fill="#ff7e00" stroke="#333" stroke-width="0.9"/><text transform="translate(149.9,540.5) rotate(-45)" text-anchor="end" font-size="7.6" letter-spacing="0.35" fill="#666">1 PM</text><rect x="161.9" y="505.0" width="11" height="25.5" fill="#ff7e00" stroke="#333" stroke-width="0.9"/><text transform="translate(169.9,540.5) rotate(-45)" text-anchor="end" font-size="7.6" letter-spacing="0.35" fill="#666">2 PM</text><rect x="181.8" y="502.9" width="11" height="27.6" fill="#ff7e00" stroke="#333" stroke-width="0.9"/><text transform="translate(189.8,540.5) rotate(-45)" text-anchor="end" font-size="7.6" letter-spacing="0.35" fill="#666">3 PM</text><rect x="201.7" y="507.0" width="11" height="23.5" fill="#ffff00" stroke="#333" stroke-width="0.9"/><text transform="translate(209.7,540.5) rotate(-45)" text-anchor="end" font-size="7.6" letter-spacing="0.35" fill="#666">4 PM</text><rect x="221.6" y="511.0" width="11" height="19.5" fill="#ffff00" stroke="#333" stroke-width="0.9"/><text transform="translate(229.6,540.5) rotate(-45)" text-anchor="end" font-size="7.6" letter-spacing="0.35" fill="#666">5 PM</text><rect x="241.5" y="507.0" width="11" height="23.5" fill="#ffff00" stroke="#333" stroke-width="0.9"/><text transform="translate(249.5,540.5) rotate(-45)" text-anchor="end" font-size="7.6" letter-spacing="0.35" fill="#666">6 PM</text><rect x="261.5" y="496.2" width="11" height="34.3" fill="#ff7e00" stroke="#333" stroke-width="0.9"/><text transform="translate(269.5,540.5) rotate(-45)" text-anchor="end" font-size="7.6" letter-spacing="0.35" fill="#666">7 PM</text><rect x="281.4" y="492.8" width="11" height="37.7" fill="#ff0000" stroke="#333" stroke-width="0.9"/><text transform="translate(289.4,540.5) rotate(-45)" text-anchor="end" font-size="7.6" letter-spacing="0.35" fill="#666">8 PM</text><rect x="301.3" y="492.5" width="11" height="38.0" fill="#ff0000" stroke="#333" stroke-width="0.9"/><text transform="translate(309.3,540.5) rotate(-45)" text-anchor="end" font-size="7.6" letter-spacing="0.35" fill="#666">9 PM</text><rect x="321.2" y="493.2" width="11" height="37.3" fill="#ff0000" stroke="#333" stroke-width="0.9"/><text transform="translate(329.2,540.5) rotate(-45)" text-anchor="end" font-size="7.6" letter-spacing="0.35" fill="#666">10 PM</text><rect x="341.1" y="494.5" width="11" height="36.0" fill="#ff7e00" stroke="#333" stroke-width="0.9"/><text transform="translate(349.1,540.5) rotate(-45)" text-anchor="end" font-size="7.6" letter-spacing="0.35" fill="#666">11 PM</text><rect x="361.1" y="500.2" width="11" height="30.3" fill="#ff7e00" stroke="#333" stroke-width="0.9"/><text transform="translate(369.1,540.5) rotate(-45)" text-anchor="end" font-size="7.6" letter-spacing="0.35" fill="#666">Nov 06, 2020 12 AM</text><rect x="381.0" y="503.3" width="11" height="27.2" fill="#ff7e00" stroke="#333" stroke-width="0.9"/><text transform="translate(389.0,540.5) rotate(-45)" text-anchor="end" font-size="7.6" letter-spacing="0.35" fill="#666">1 AM</text><rect x="400.9" y="505.0" width="11" height="25.5" fill="#ff7e00" stroke="#333" stroke-width="0.9"/><text transform="translate(408.9,540.5) rotate(-45)" text-anchor="end" font-size="7.6" letter-spacing="0.35" fill="#666">2 AM</text><rect x="420.8" y="506.0" width="11" height="24.5" fill="#ffff00" stroke="#333" stroke-width="0.9"/><text transform="translate(428.8,540.5) rotate(-45)" text-anchor="end" font-size="7.6" letter-spacing="0.35" fill="#666">3 AM</text><rect x="440.7" y="508.3" width="11" height="22.2" fill="#ffff00" stroke="#333" stroke-width="0.9"/><text transform="translate(448.7,540.5) rotate(-45)" text-anchor="end" font-size="7.6" letter-spacing="0.35" fill="#666">4 AM</text><rect x="460.7" y="510.0" width="11" height="20.5" fill="#ffff00" stroke="#333" stroke-width="0.9"/><text transform="translate(468.7,540.5) rotate(-45)" text-anchor="end" font-size="7.6" letter-spacing="0.35" fill="#666">5 AM</text><rect x="480.6" y="512.4" width="11" height="18.1" fill="#ffff00" stroke="#333" stroke-width="0.9"/><text transform="translate(488.6,540.5) rotate(-45)" text-anchor="end" font-size="7.6" letter-spacing="0.35" fill="#666">6 AM</text><rect x="500.5" y="514.0" width="11" height="16.5" fill="#ffff00" stroke="#333" stroke-width="0.9"/><text transform="translate(508.5,540.5) rotate(-45)" text-anchor="end" font-size="7.6" letter-spacing="0.35" fill="#666">7 AM</text><rect x="520.4" y="514.0" width="11" height="16.5" fill="#ffff00" stroke="#333" stroke-width="0.9"/><text transform="translate(528.4,540.5) rotate(-45)" text-anchor="end" font-size="7.6" letter-spacing="0.35" fill="#666">8 AM</text><rect x="260" y="608.7" width="11" height="8" fill="#ccc"/><text x="274.6" y="615.6" font-size="9" font-weight="bold" fill="#333">AQI</text></svg>
</div>

<div style="position:absolute;left:553px;top:368px;width:168px;height:252px;border:1px solid #034a87;background:#eee">
 <div style="position:absolute;left:0;top:0;width:166px;height:49px;background:#034a87"></div>
 <div style="position:absolute;left:0;top:49px;width:166px;height:77px;background:#ff0"></div>
 <div class="a" style="left:0;width:166px;text-align:center;top:4.5px;font-size:10px;font-weight:bold;color:#fff">Current Conditions</div>
 <div class="a" style="left:0;width:166px;text-align:center;top:19.5px;font-size:8px;font-weight:bold;color:#fff">observed at</div>
 <div class="a" style="left:0;width:166px;text-align:center;top:32px;font-size:10px;font-weight:bold;color:#fff">Nov 6, 2020 8:00 AM (LT)</div>
 <div class="a" style="left:0;width:166px;text-align:center;top:61px;font-size:13px;font-weight:bold;color:#111">67 AQI</div>
 <div class="a" style="left:0;width:166px;text-align:center;top:79.5px;font-size:13px;font-weight:bold;color:#111">Moderate</div>
 <div class="a" style="left:0;width:166px;text-align:center;top:98.5px;font-size:13px;font-weight:bold;color:#111">PM2.5</div>
 <div class="a" style="left:0;width:166px;text-align:center;top:132.6px;font-size:8px;font-weight:bold;color:#222">Health Message</div>
 <div class="a" style="left:3px;top:147px;font-size:8px;color:#444;line-height:14px;white-space:normal;width:170px">The AQI is between 51 and 100. Air quality is<br>acceptable; however, pollution in this range<br>may pose a moderate health concern for a<br>very small number of individuals. People<br>who are unusually sensitive to ozone or<br>particle pollution may experience respiratory<br>symptoms.</div>
</div>
</body></html>
